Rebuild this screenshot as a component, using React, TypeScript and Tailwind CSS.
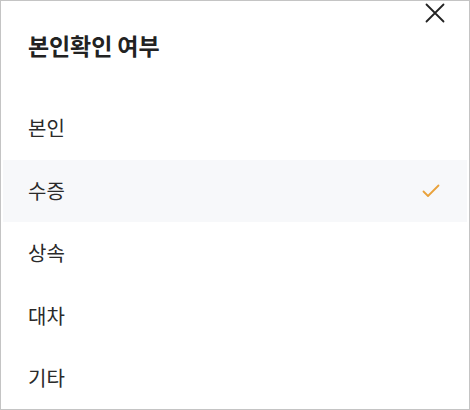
import React, { useState } from 'react';

const OPTIONS = ['본인', '수증', '상속', '대차', '기타'];

const CloseIcon = () => (
  <svg width="20" height="20" viewBox="0 0 20 20" fill="none">
    <path d="M1.5 1.5L18.5 18.5M18.5 1.5L1.5 18.5" stroke="#222" strokeWidth="1.8" strokeLinecap="round" />
  </svg>
);

const CheckIcon = () => (
  <svg width="18" height="14" viewBox="0 0 18 14" fill="none">
    <path d="M1.5 7.5L6 12L16.5 1.5" stroke="#e9a23b" strokeWidth="1.8" strokeLinecap="round" strokeLinejoin="round" />
  </svg>
);

export default function App() {
  const [selected, setSelected] = useState('수증');

  return (
    <div
      className="w-[470px] h-[410px] bg-white border border-[#c4c4c4] px-[2px] overflow-hidden flex flex-col"
      style={{ fontFamily: '"Noto Sans CJK KR", "Noto Sans", sans-serif' }}
    >
      <div className="relative h-[96px] shrink-0 flex items-center pl-[25px] pb-[8px]">
        <h2 className="text-[23px] font-bold text-[#222] tracking-[-0.1px]">본인확인 여부</h2>
        <button className="absolute right-[22px] top-[2px]" aria-label="닫기">
          <CloseIcon />
        </button>
      </div>
      <ul className="flex flex-col">
        {OPTIONS.map(opt => (
          <li
            key={opt}
            onClick={() => setSelected(opt)}
            className={`h-[62.5px] flex items-center justify-between pl-[25px] pr-[27px] cursor-pointer ${
              selected === opt ? 'bg-[#f7f8fa]' : 'bg-white'
            }`}
          >
            <span className="text-[20px] text-[#2a2a2a]">{opt}</span>
            {selected === opt && <CheckIcon />}
          </li>
        ))}
      </ul>
    </div>
  );
}
